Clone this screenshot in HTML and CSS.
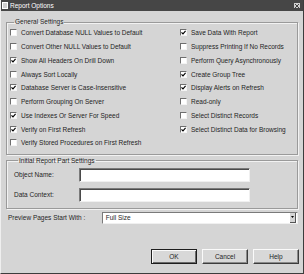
FILE: index.html
```html
<!DOCTYPE html>
<html lang="en">
  <head>
    <meta charset="UTF-8" />
    <title>Report Options</title>
    <link rel="stylesheet" href="styles.css">
  </head>
  <body>
    <div class="dialog">
      <!-- Title bar -->
      <div class="titlebar">
        <span class="app-icon"></span>
        <span class="title">Report Options</span>
        <span class="close">
          <svg width="4" height="4" viewBox="0 0 4 4"><path d="M0 0L4 4M4 0L0 4" stroke="#333" stroke-width="0.9" /></svg>
        </span>
      </div>

      <div class="content">
        <!-- General Settings -->
        <fieldset class="group general">
          <legend>General Settings</legend>
          <div class="columns">
            <div class="col col-left">
              <label class="check"><span class="box"></span>Convert Database NULL Values to Default</label>
              <label class="check"><span class="box"></span>Convert Other NULL Values to Default</label>
              <label class="check"><span class="box checked"></span>Show All Headers On Drill Down</label>
              <label class="check"><span class="box"></span>Always Sort Locally</label>
              <label class="check"><span class="box checked"></span>Database Server is Case-Insensitive</label>
              <label class="check"><span class="box"></span>Perform Grouping On Server</label>
              <label class="check"><span class="box checked"></span>Use Indexes Or Server For Speed</label>
              <label class="check"><span class="box checked"></span>Verify on First Refresh</label>
              <label class="check"><span class="box"></span>Verify Stored Procedures on First Refresh</label>
            </div>
            <div class="col">
              <label class="check"><span class="box checked"></span>Save Data With Report</label>
              <label class="check"><span class="box"></span>Suppress Printing If No Records</label>
              <label class="check"><span class="box"></span>Perform Query Asynchronously</label>
              <label class="check"><span class="box checked"></span>Create Group Tree</label>
              <label class="check"><span class="box checked"></span>Display Alerts on Refresh</label>
              <label class="check"><span class="box"></span>Read-only</label>
              <label class="check"><span class="box"></span>Select Distinct Records</label>
              <label class="check"><span class="box checked"></span>Select Distinct Data for Browsing</label>
            </div>
          </div>
        </fieldset>

        <!-- Initial Report Part Settings -->
        <fieldset class="group initial">
          <legend>Initial Report Part Settings</legend>
          <div class="field">
            <span class="field-label">Object Name:</span>
            <span class="edit"></span>
          </div>
          <div class="field">
            <span class="field-label">Data Context:</span>
            <span class="edit"></span>
          </div>
        </fieldset>

        <!-- Preview -->
        <div class="preview">
          <span class="preview-label">Preview Pages Start With :</span>
          <div class="combo">
            <span class="combo-text">Full Size</span>
            <span class="combo-btn"></span>
          </div>
        </div>

        <!-- Buttons -->
        <div class="buttons">
          <div class="btn default"><span>OK</span></div>
          <div class="btn"><span>Cancel</span></div>
          <div class="btn"><span>Help</span></div>
        </div>
      </div>
    </div>
  </body>
</html>
```

FILE: styles.css
```css
body {
  margin: 0;
  font-family: "Liberation Sans", Arial, sans-serif;
  font-size: 6.5px;
  color: #1e1e1e;
  background: #d5d5d5;
}
.dialog {
  width: 304px;
  height: 274px;
  box-sizing: border-box;
  background: #d5d5d5;
  border-right: 1px solid #3c3c3c;
  border-bottom: 1px solid #3c3c3c;
  border-left: 1px solid #efefef;
  display: flex;
  flex-direction: column;
}
.titlebar {
  height: 11px;
  background: #464646;
  color: #fff;
  display: flex;
  align-items: center;
  padding: 0 3px 0 1px;
}
.app-icon {
  width: 4px;
  height: 5px;
  background: #cfcfcf;
  border: 0.5px solid #fff;
  margin-right: 2px;
}
.title {
  flex: 1;
  line-height: 11px;
}
.close {
  width: 6px;
  height: 5px;
  background: #d0d0d0;
  display: flex;
  align-items: center;
  justify-content: center;
}
.content {
  padding: 0 5px;
}
.group {
  margin: 0;
  padding: 0;
  min-width: 0;
  border: 1px solid #9a9a9a;
  box-shadow: 1px 1px 0 #f2f2f2, inset 1px 1px 0 #f2f2f2;
}
.group legend {
  margin-left: 4px;
  padding: 0 1px;
  line-height: 8px;
}
.general {
  margin-top: 7px;
  padding: 0 0 4px 3px;
}
.columns {
  display: flex;
}
.col {
  display: flex;
  flex-direction: column;
}
.col-left {
  width: 170px;
}
.check {
  height: 13.75px;
  display: flex;
  align-items: center;
  white-space: nowrap;
}
.box {
  width: 7px;
  height: 7px;
  box-sizing: border-box;
  background: #fff;
  border: 1px solid;
  border-color: #6e6e6e #f4f4f4 #f4f4f4 #6e6e6e;
  margin-right: 4px;
  flex: none;
}
.box.checked {
  background: #fff url("data:image/svg+xml;utf8,<svg xmlns='http://www.w3.org/2000/svg' width='5' height='5' viewBox='0 0 5 5'><path d='M0.5 2.3L2 3.8L4.6 0.9' fill='none' stroke='black' stroke-width='1.2'/></svg>") center / 5px 5px no-repeat;
}
.initial {
  margin-top: 2px;
  padding: 3px 0 6px 7px;
}
.field {
  display: flex;
  align-items: center;
  height: 14px;
}
.field + .field {
  margin-top: 6px;
}
.field-label {
  width: 65px;
}
.edit {
  width: 171px;
  height: 14px;
  box-sizing: border-box;
  background: #fff;
  border: 1px solid;
  border-color: #7a7a7a #f0f0f0 #f0f0f0 #7a7a7a;
  box-shadow: inset 1px 1px 0 #4a4a4a;
}
.preview {
  margin-top: 3px;
  display: flex;
  align-items: center;
  height: 12px;
}
.preview-label {
  width: 94px;
  margin-left: 2px;
}
.combo {
  width: 197px;
  height: 12px;
  box-sizing: border-box;
  background: #fff;
  border: 1px solid;
  border-color: #7a7a7a #f0f0f0 #f0f0f0 #7a7a7a;
  display: flex;
  align-items: center;
  padding-left: 3px;
}
.combo-text {
  flex: 1;
}
.combo-btn {
  width: 5px;
  height: 9px;
  margin-right: 1px;
  background: #d5d5d5 url("data:image/svg+xml;utf8,<svg xmlns='http://www.w3.org/2000/svg' width='3' height='2'><path d='M0 0H3L1.5 2Z' fill='black'/></svg>") center no-repeat;
  border-right: 1px solid #555;
  border-bottom: 1px solid #555;
}
.buttons {
  margin-top: 25px;
  display: flex;
  justify-content: flex-end;
  gap: 5px;
  margin-right: -1px;
}
.btn {
  width: 46px;
  height: 15px;
  box-sizing: border-box;
  background: #d8d8d8;
  border: 1px solid;
  border-color: #fafafa #3c3c3c #3c3c3c #fafafa;
  box-shadow: inset -1px -1px 0 #8a8a8a;
  display: flex;
  align-items: center;
  justify-content: center;
}
.btn.default {
  border-color: #1e1e1e;
  box-shadow: inset 1px 1px 0 #fafafa, inset -1px -1px 0 #6a6a6a;
}
```
